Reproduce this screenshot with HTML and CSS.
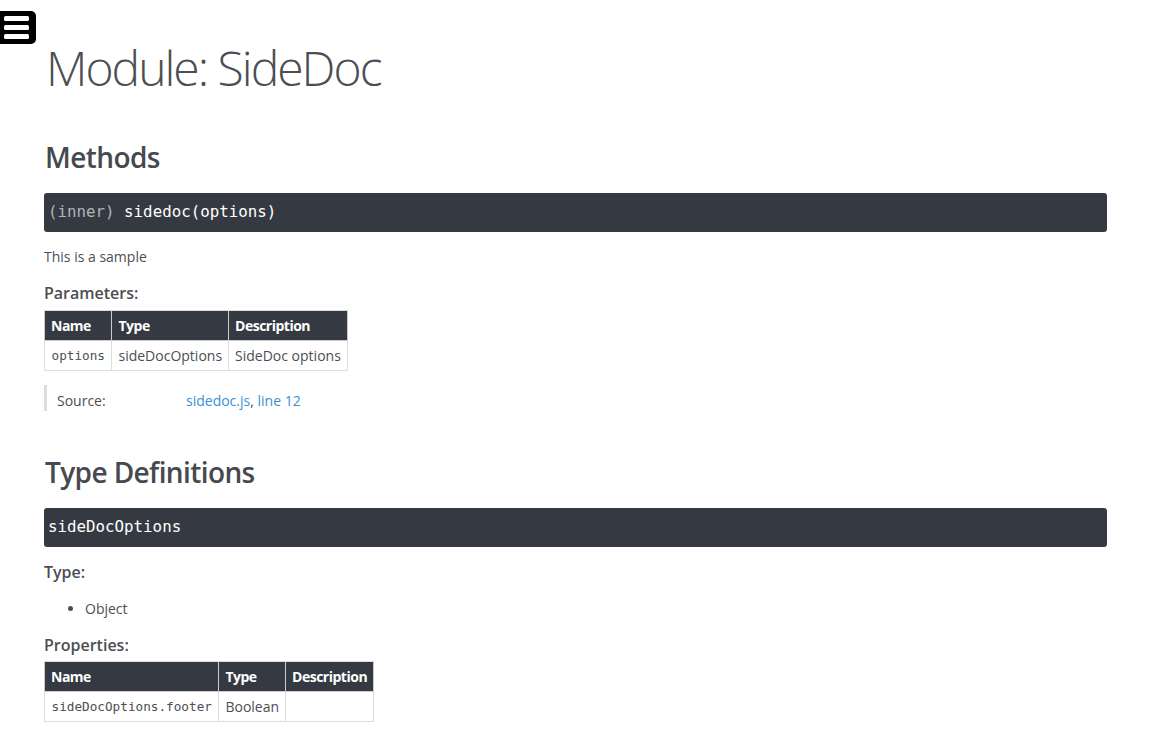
FILE: index.html
```html
<!DOCTYPE html>
<html lang="en">
<head>
<meta charset="utf-8">
<title>Module: SideDoc</title>
<link rel="stylesheet" href="styles.css">
</head>
<body>
<button class="nav-trigger" aria-label="Menu">
  <svg width="25" height="23" viewBox="0 0 25 23" aria-hidden="true">
    <rect x="0" y="0" width="25" height="5" rx="1.5" fill="#fff"/>
    <rect x="0" y="9" width="25" height="5" rx="1.5" fill="#fff"/>
    <rect x="0" y="18" width="25" height="5" rx="1.5" fill="#fff"/>
  </svg>
</button>
<main class="main">
  <h1 class="page-title">Module: SideDoc</h1>

  <h3 class="subsection-title first">Methods</h3>
  <h4 class="name"><span class="attribs">(inner) </span>sidedoc(options)</h4>
  <p class="description">This is a sample</p>

  <h5 class="label">Parameters:</h5>
  <table class="params">
    <thead>
      <tr><th>Name</th><th>Type</th><th>Description</th></tr>
    </thead>
    <tbody>
      <tr><td class="code">options</td><td>sideDocOptions</td><td>SideDoc options</td></tr>
    </tbody>
  </table>

  <dl class="details">
    <dt>Source:</dt>
    <dd><a href="#">sidedoc.js</a>, <a href="#">line 12</a></dd>
  </dl>

  <h3 class="subsection-title">Type Definitions</h3>
  <h4 class="name">sideDocOptions</h4>

  <h5 class="label after-bar">Type:</h5>
  <ul class="type-list">
    <li>Object</li>
  </ul>

  <h5 class="label">Properties:</h5>
  <table class="params">
    <thead>
      <tr><th>Name</th><th>Type</th><th>Description</th></tr>
    </thead>
    <tbody>
      <tr><td class="code">sideDocOptions.footer</td><td>Boolean</td><td></td></tr>
    </tbody>
  </table>
</main>
</body>
</html>
```

FILE: styles.css
```css
html, body {
  margin: 0;
  padding: 0;
  background: #fff;
}

body {
  font-family: "Open Sans", "Liberation Sans", sans-serif;
  font-size: 14px;
  line-height: 1.7;
  color: #4d4e53;
}

.nav-trigger {
  position: fixed;
  top: 11px;
  left: 0;
  width: 36px;
  height: 33px;
  margin: 0;
  padding: 0 0 0 4px;
  border: 0;
  border-radius: 0 5px 5px 0;
  background: #000;
  display: flex;
  align-items: center;
  justify-content: flex-start;
}

.main {
  padding: 1px 68px 40px 44px;
}

.page-title {
  margin: 38px 0 0 0;
  padding-left: 2px;
  font-size: 48px;
  font-weight: 300;
  line-height: 1.2;
  letter-spacing: -2px;
  color: #4d4e53;
}

.subsection-title {
  margin: 45px 0 0 0;
  padding-left: 1px;
  font-size: 28px;
  font-weight: 600;
  line-height: 1.2;
  letter-spacing: -0.6px;
  color: #46494f;
}

.subsection-title.first {
  margin-top: 44px;
}

.name {
  margin: 19px 0 0 0;
  padding: 7px 4px 9px 4px;
  background: #353a42;
  border-radius: 3px;
  color: #fff;
  font-family: "DejaVu Sans Mono", "Liberation Mono", monospace;
  font-size: 15.8px;
  font-weight: 400;
  line-height: 23px;
}

.attribs {
  color: #b0b3b8;
}

.description {
  margin: 13px 0 0 0;
}

.label {
  margin: 15.5px 0 0 0;
  font-size: 16px;
  font-weight: 600;
  line-height: 1.2;
  color: #4d4e53;
}

.params {
  margin-top: 6px;
  border-collapse: collapse;
  border: 1px solid #ddd;
}

.params th {
  background: #353a42;
  color: #fff;
  font-weight: 700;
  letter-spacing: -0.5px;
  text-align: left;
  padding: 4px 6px;
  line-height: 21px;
  border: 1px solid #ccc;
  border-top-color: #ddd;
}

.params td {
  padding: 4px 6px;
  line-height: 21px;
  border: 1px solid #ddd;
  vertical-align: middle;
}

.params td.code {
  padding: 4px 6.5px;
  font-family: "DejaVu Sans Mono", "Liberation Mono", monospace;
  font-size: 12.7px;
}

.details {
  display: flex;
  margin: 14px 0 0 0;
  padding: 6px 0 0 10px;
  border-left: 3px solid #ddd;
  line-height: 20px;
}

.details dt {
  width: 129px;
  margin: 0;
}

.details dd {
  margin: 0;
}

.details a {
  color: #3a8fd6;
  text-decoration: none;
}

.type-list {
  margin: 15px 0 0 0;
  padding-left: 41px;
}

.type-list li {
  line-height: 1.7;
}
```
